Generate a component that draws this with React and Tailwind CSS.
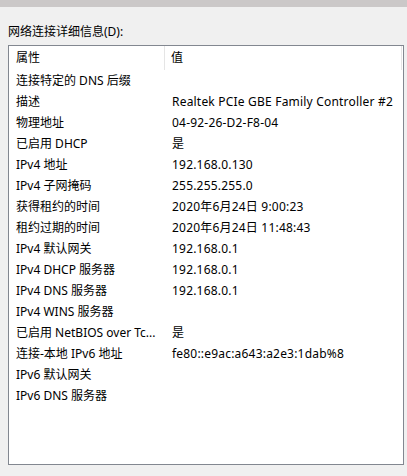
import React from "react";

const rows = [
  ["连接特定的 DNS 后缀", ""],
  ["描述", "Realtek PCIe GBE Family Controller #2"],
  ["物理地址", "04-92-26-D2-F8-04"],
  ["已启用 DHCP", "是"],
  ["IPv4 地址", "192.168.0.130"],
  ["IPv4 子网掩码", "255.255.255.0"],
  ["获得租约的时间", "2020年6月24日 9:00:23"],
  ["租约过期的时间", "2020年6月24日 11:48:43"],
  ["IPv4 默认网关", "192.168.0.1"],
  ["IPv4 DHCP 服务器", "192.168.0.1"],
  ["IPv4 DNS 服务器", "192.168.0.1"],
  ["IPv4 WINS 服务器", ""],
  ["已启用 NetBIOS over Tc...", "是"],
  ["连接-本地 IPv6 地址", "fe80::e9ac:a643:a2e3:1dab%8"],
  ["IPv6 默认网关", ""],
  ["IPv6 DNS 服务器", ""],
];

const App = () => {
  return (
    <div
      className="w-[407px] h-[476px] bg-[#f0f0f0] text-[12px] text-black flex flex-col overflow-hidden"
      style={{ fontFamily: '"Segoe UI", "Noto Sans", "Noto Sans CJK SC", sans-serif' }}
    >
      <div className="h-[7px] bg-[#cbc8c8]" />
      <div className="px-[8px] pt-[17px] h-[38px] leading-[16px]">网络连接详细信息(D):</div>
      <div className="mx-[8px] w-[396px] h-[420px] border border-[#828790] bg-white flex flex-col">
        {/* header */}
        <div className="flex h-[24px] items-center">
          <div className="w-[156px] h-full flex items-center pl-[7px] border-r border-[#e5e5e5]">
            属性
          </div>
          <div className="flex-1 h-full flex items-center pl-[6px] border-r border-[#e5e5e5] mr-[1px]">
            值
          </div>
        </div>
        <div className="flex flex-col">
          {rows.map(([k, v]) => (
            <div key={k} className="flex h-[21px] items-center whitespace-nowrap">
              <div className="w-[156px] pl-[7px]">{k}</div>
              <div className="pl-[7px] tracking-[0.2px]">{v}</div>
            </div>
          ))}
        </div>
      </div>
    </div>
  );
};

export default App;
